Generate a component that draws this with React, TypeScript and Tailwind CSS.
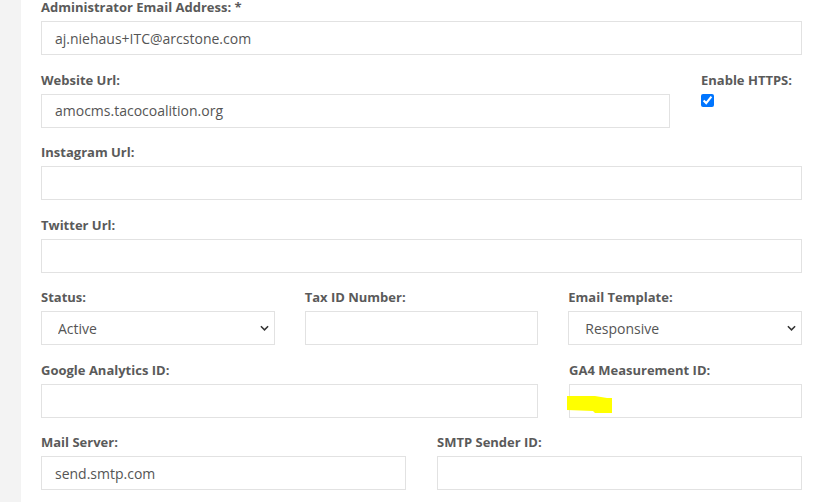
import React from "react";

const font = { fontFamily: '"Open Sans", "Liberation Sans", sans-serif' };

function Label({ children }: { children: React.ReactNode }) {
  return (
    <label className="mb-1 block h-5 text-[13px] font-bold leading-5 text-[#5a5a5a]">
      {children}
    </label>
  );
}

function TextInput({ value = "" }: { value?: string }) {
  return (
    <input
      type="text"
      defaultValue={value}
      className="block h-[34px] w-full border border-[#e2e2e2] bg-white px-[13px] text-[14px] text-[#555] outline-none"
    />
  );
}

function Select({ value }: { value: string }) {
  return (
    <div className="relative">
      <select
        defaultValue={value}
        className="block h-[34px] w-full appearance-none border border-[#e2e2e2] bg-white pl-4 text-[14px] text-[#555] outline-none"
      >
        <option>{value}</option>
      </select>
      <svg
        viewBox="0 0 10 6"
        className="pointer-events-none absolute right-[6px] top-[14px] h-[6px] w-[9px]"
      >
        <path d="M1 1l4 4 4-4" fill="none" stroke="#333" strokeWidth="1.7" />
      </svg>
    </div>
  );
}

function Field({ label, children }: { label: string; children: React.ReactNode }) {
  return (
    <div className="mb-[14.5px]">
      <Label>{label}</Label>
      {children}
    </div>
  );
}

export default function App() {
  return (
    <div className="flex h-[502px] w-[828px] overflow-hidden bg-white" style={font}>
      <div className="w-[21px] shrink-0 bg-[#f3f3f3]" />
      <div className="w-[781px] pl-5 -mt-[3px]">
        <Field label="Administrator Email Address: *">
          <TextInput value="aj.niehaus+ITC@arcstone.com" />
        </Field>

        <div className="grid grid-cols-[629px_101px] gap-x-[31px]">
          <Field label="Website Url:">
            <TextInput value="amocms.tacocoalition.org" />
          </Field>
          <div>
            <Label>Enable HTTPS:</Label>
            <input
              type="checkbox"
              defaultChecked
              className="m-0 mt-[4px] block h-[13px] w-[13px] accent-[#0075ff]"
            />
          </div>
        </div>

        <Field label="Instagram Url:">
          <TextInput />
        </Field>

        <Field label="Twitter Url:">
          <TextInput />
        </Field>

        <div className="grid grid-cols-3 gap-x-[30px]">
          <Field label="Status:">
            <Select value="Active" />
          </Field>
          <Field label="Tax ID Number:">
            <TextInput />
          </Field>
          <Field label="Email Template:">
            <Select value="Responsive" />
          </Field>
        </div>

        <div className="grid grid-cols-[497px_233px] gap-x-[31px]">
          <Field label="Google Analytics ID:">
            <TextInput />
          </Field>
          <Field label="GA4 Measurement ID:">
            <div className="relative">
              <TextInput />
              <svg
                viewBox="0 0 46 19"
                className="pointer-events-none absolute left-[-2px] top-[11px] h-[19px] w-[46px]"
              >
                <path d="M0 1 L28 1 L40 3 L45 3 L45 18 L28 18 L26 16 L0 15 Z" fill="#ffff00" />
              </svg>
            </div>
          </Field>
        </div>

        <div className="grid grid-cols-2 gap-x-[31px]">
          <Field label="Mail Server:">
            <TextInput value="send.smtp.com" />
          </Field>
          <Field label="SMTP Sender ID:">
            <TextInput />
          </Field>
        </div>
      </div>
    </div>
  );
}
